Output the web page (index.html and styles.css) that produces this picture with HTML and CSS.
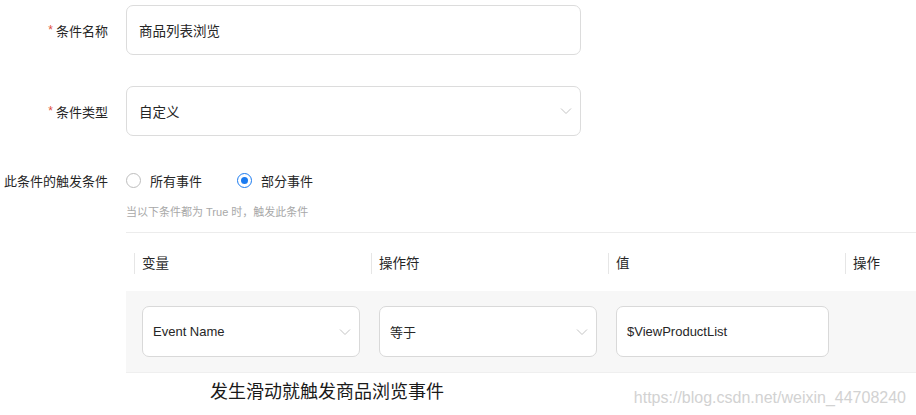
FILE: index.html
```html
<!DOCTYPE html>
<html lang="zh">
<head>
<meta charset="utf-8">
<link rel="stylesheet" href="styles.css">
</head>
<body>
<div class="page">
  <div class="field first">
    <div class="label"><span class="req">*</span>条件名称</div>
    <div class="input">商品列表浏览</div>
  </div>
  <div class="field second">
    <div class="label"><span class="req">*</span>条件类型</div>
    <div class="input select">自定义<svg class="chev" width="12" height="8" viewBox="0 0 12 8"><path d="M1 1.5 L6 6.5 L11 1.5" fill="none" stroke="#c4c4c4" stroke-width="1"/></svg></div>
  </div>
  <div class="field trigger">
    <div class="label">此条件的触发条件</div>
    <div class="radios">
      <span class="radio"><span class="dot"></span>所有事件</span>
      <span class="radio on"><span class="dot"></span>部分事件</span>
    </div>
  </div>
  <div class="hint">当以下条件都为 True 时，触发此条件</div>
  <div class="table">
    <div class="thead">
      <div class="th">变量</div>
      <div class="th">操作符</div>
      <div class="th">值</div>
      <div class="th">操作</div>
    </div>
    <div class="trow">
      <div class="td"><div class="ctl sel">Event Name<svg class="chev" width="12" height="8" viewBox="0 0 12 8"><path d="M1 1.5 L6 6.5 L11 1.5" fill="none" stroke="#c4c4c4" stroke-width="1"/></svg></div></div>
      <div class="td"><div class="ctl sel">等于<svg class="chev" width="12" height="8" viewBox="0 0 12 8"><path d="M1 1.5 L6 6.5 L11 1.5" fill="none" stroke="#c4c4c4" stroke-width="1"/></svg></div></div>
      <div class="td"><div class="ctl val">$ViewProductList</div></div>
      <div class="td"></div>
    </div>
  </div>
  <div class="footer">
    <div class="caption">发生滑动就触发商品浏览事件</div>
    <div class="mark">https://blog.csdn.net/weixin_44708240</div>
  </div>
</div>
</body>
</html>
```

FILE: styles.css
```css
* { box-sizing: border-box; }
html, body { margin: 0; padding: 0; background: #fff; }
body {
  font-family: "Liberation Sans", "Noto Sans CJK SC", sans-serif;
  color: #262626;
  font-size: 13px;
  width: 916px;
  height: 415px;
  overflow: hidden;
}
.page { padding-top: 5px; }
.field { display: flex; align-items: center; }
.label {
  width: 126px;
  padding-right: 18px;
  text-align: right;
  font-size: 13px;
  color: #262626;
  white-space: nowrap;
}
.req { color: #e0503c; margin-right: 3px; font-size: 12px; position: relative; top: -2px; }
.input {
  width: 455px;
  height: 50px;
  border: 1px solid #dcdcdc;
  border-radius: 7px;
  padding: 0 12px;
  display: flex;
  align-items: center;
  font-size: 13.5px;
  color: #262626;
}
.select { justify-content: space-between; padding-right: 8px; }
.second { margin-top: 31px; }
.trigger { margin-top: 34px; height: 20px; }
.radios { display: flex; align-items: center; }
.radio { display: flex; align-items: center; margin-right: 35px; font-size: 13px; }
.dot {
  width: 15px; height: 15px; border-radius: 50%;
  border: 1px solid #bdbdbd;
  margin-right: 9px;
  display: inline-flex; align-items: center; justify-content: center;
}
.radio.on .dot { border-color: #1b7bf0; }
.radio.on .dot::after {
  content: ""; width: 7px; height: 7px; border-radius: 50%; background: #1b7bf0;
}
.hint {
  margin-left: 126px;
  margin-top: 14px;
  font-size: 11px;
  line-height: 16px;
  color: #a8a8a8;
}
.table {
  margin-left: 126px;
  margin-top: 12px;
  width: 790px;
  overflow: hidden;
  border-top: 1px solid #ececec;
}
.thead { display: flex; height: 58px; align-items: flex-start; padding: 20px 0 0 8px; }
.th {
  width: 237px;
  flex: none;
  border-left: 1px solid #e6e6e6;
  padding-left: 7px;
  height: 21px;
  line-height: 21px;
  font-size: 13.5px;
  color: #262626;
}
.trow {
  display: flex;
  height: 82px;
  align-items: flex-start;
  padding: 15px 0 0 16px;
  background: #f7f7f7;
  border-bottom: 1px solid #efefef;
}
.td { width: 237px; flex: none; }
.ctl {
  height: 51px;
  background: #fff;
  border: 1px solid #d9d9d9;
  border-radius: 7px;
  display: flex;
  align-items: center;
  padding: 0 10px;
  font-size: 13px;
  color: #262626;
}
.sel { width: 218px; justify-content: space-between; padding-right: 8px; }
.val { width: 213px; }
.chev { flex: none; }
.footer { display: flex; align-items: flex-start; height: 40px; }
.caption { margin-left: 210px; font-size: 18px; line-height: 22px; color: #1a1a1a; margin-top: 8px; }
.mark { margin-left: auto; margin-right: 10px; font-size: 16px; line-height: 18px; color: #d2d2d2; margin-top: 16px; }
```
